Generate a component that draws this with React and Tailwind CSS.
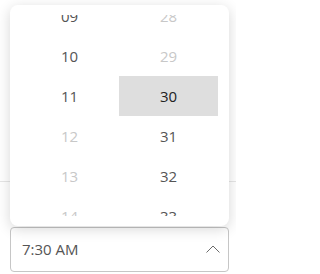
import React from 'react'

const font = { fontFamily: '"Open Sans", "Liberation Sans", sans-serif' }

const hours = [
  { v: '09', off: false },
  { v: '10', off: false },
  { v: '11', off: false },
  { v: '12', off: true },
  { v: '13', off: true },
  { v: '14', off: true },
]

const minutes = [
  { v: '28', off: true },
  { v: '29', off: true },
  { v: '30', sel: true },
  { v: '31' },
  { v: '32' },
  { v: '33' },
]

function Cell({ item }) {
  let cls = 'text-[#555555]'
  if (item.off) cls = 'text-[#c8c8c8]'
  if (item.sel) cls = 'text-[#222222] bg-[#dedede]'
  return (
    <div className={`h-[40px] flex items-center justify-center text-[15px] ${cls}`}>
      {item.v}
    </div>
  )
}

export default function App() {
  return (
    <div className="relative w-[236px] h-[274px] bg-white overflow-hidden" style={font}>
      {/* page behind the popup */}
      <div className="h-[181px]" />
      <div className="h-px bg-[#e6e6e6]" />
      <div className="mt-[45px] ml-[10px] w-[219px] h-[45px] border border-[#c6c6c6] rounded-[4px] flex items-center justify-between pl-[11px] pr-[8px]">
        <span className="text-[15px] text-[#555555]">7:30 AM</span>
        <svg width="14" height="8" viewBox="0 0 14 8" className="mt-[-2px]">
          <polyline points="0.5,7.5 7,1 13.5,7.5" fill="none" stroke="#6b6b6b" strokeWidth="1" />
        </svg>
      </div>

      {/* time picker popup */}
      <div className="absolute left-[10px] top-[5px] w-[219px] h-[221px] bg-white rounded-[8px] shadow-[0_3px_14px_rgba(0,0,0,0.16)] py-[10px] pl-[10px] pr-[11px]">
        <div className="h-full overflow-hidden">
          <div className="mt-[-19px] grid grid-cols-2">
            <div>
              {hours.map((h) => (
                <Cell key={h.v} item={h} />
              ))}
            </div>
            <div>
              {minutes.map((m) => (
                <Cell key={m.v} item={m} />
              ))}
            </div>
          </div>
        </div>
      </div>
    </div>
  )
}
